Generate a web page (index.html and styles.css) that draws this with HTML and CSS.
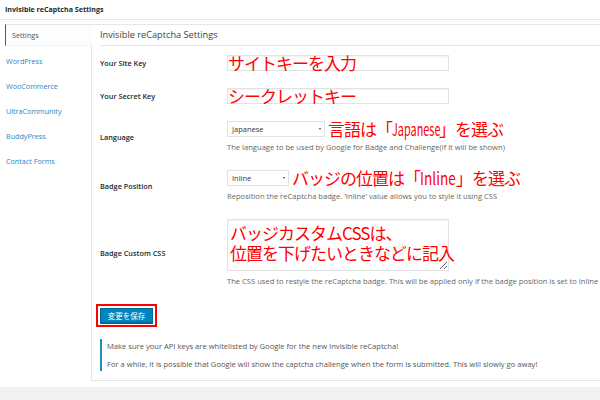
FILE: index.html
```html
<!DOCTYPE html>
<html lang="ja">
<head>
<meta charset="utf-8">
<title>Invisible reCaptcha Settings</title>
<link rel="stylesheet" href="styles.css">
</head>
<body>
<div class="page">
  <header class="topbar">Invisible reCaptcha Settings</header>
  <div class="wrap">
    <nav class="tabs">
      <a class="tab active">Settings</a>
      <a class="tab">WordPress</a>
      <a class="tab">WooCommerce</a>
      <a class="tab">UltraCommunity</a>
      <a class="tab">BuddyPress</a>
      <a class="tab">Contact Forms</a>
    </nav>
    <main class="panel">
      <h2 class="title">Invisible reCaptcha Settings</h2>
      <div class="form">
        <div class="label">Your Site Key</div>
        <div class="field">
          <div class="annot">
            <input class="text" type="text">
            <span class="note over">サイトキーを入力</span>
          </div>
        </div>

        <div class="label">Your Secret Key</div>
        <div class="field">
          <div class="annot">
            <input class="text" type="text">
            <span class="note over">シークレットキー</span>
          </div>
        </div>

        <div class="label">Language</div>
        <div class="field">
          <div class="line">
            <div class="select lang"><span>Japanese</span><i class="caret"></i></div>
            <span class="note">言語は「<span class="latin jp">Japanese</span>」を選ぶ</span>
          </div>
          <div class="desc">The language to be used by Google for Badge and Challenge(if it will be shown)</div>
        </div>

        <div class="label">Badge Position</div>
        <div class="field">
          <div class="line">
            <div class="select badge"><span>Inline</span><i class="caret"></i></div>
            <span class="note">バッジの位置は「<span class="latin il">Inline</span>」を選ぶ</span>
          </div>
          <div class="desc">Reposition the reCaptcha badge. 'Inline' value allows you to style it using CSS</div>
        </div>

        <div class="label">Badge Custom CSS</div>
        <div class="field">
          <div class="annot tall">
            <textarea class="area"></textarea>
            <div class="note over block"><div>バッジカスタムCSSは、</div><div>位置を下げたいときなどに記入</div></div>
          </div>
          <div class="desc">The CSS used to restyle the reCaptcha badge. This will be applied only if the badge position is set to Inline</div>
        </div>
      </div>
      <div class="submit"><button class="btn" type="button">変更を保存</button></div>
      <div class="notice">
        <p>Make sure your API keys are whitelisted by Google for the new Invisible reCaptcha!</p>
        <p>For a while, it is possible that Google will show the captcha challenge when the form is submitted. This will slowly go away!</p>
      </div>
    </main>
  </div>
</div>
</body>
</html>
```

FILE: styles.css
```css
html, body {
  margin: 0;
  background: #f1f1f1;
}
body {
  width: 600px;
  height: 400px;
  overflow: hidden;
  font-family: "Open Sans", "Noto Sans", "Liberation Sans", sans-serif;
}
.page {
  background: #fff;
  padding-bottom: 6px;
}
.topbar {
  height: 19px;
  line-height: 19px;
  border-bottom: 1px solid #e5e5e5;
  padding-left: 5px;
  font-size: 7.1px;
  font-weight: 700;
  color: #23282d;
}
.wrap {
  display: flex;
  margin-top: 4px;
}
.tabs {
  width: 86px;
  margin-left: 5px;
  display: flex;
  flex-direction: column;
}
.tab {
  display: block;
  height: 25px;
  line-height: 25px;
  padding-left: 1px;
  font-size: 7.2px;
  color: #2a86c0;
}
.tab.active {
  height: 20px;
  line-height: 20px;
  border-top: 1px solid #e5e5e5;
  border-bottom: 1px solid #eef3f7;
  border-left: 1px solid #0073aa;
  background: #fbfdff;
  color: #555;
  padding-left: 6px;
  margin-right: -1px;
  margin-bottom: 3px;
  position: relative;
  z-index: 1;
}
.panel {
  flex: 1;
  border-top: 1px solid #e5e5e5;
  border-left: 1px solid #e5e5e5;
  border-bottom: 1px solid #e5e5e5;
  padding: 0 0 9px 8px;
}
.title {
  margin: 0;
  height: 20px;
  line-height: 20px;
  border-bottom: 1px solid #e5e5e5;
  font-size: 9.2px;
  font-weight: 400;
  color: #444;
}
.form {
  display: grid;
  grid-template-columns: 127px 1fr;
  row-gap: 17px;
  align-items: center;
  margin-top: 9px;
}
.label {
  font-size: 7.3px;
  font-weight: 600;
  color: #23282d;
}
.annot {
  position: relative;
  width: 222px;
  height: 16px;
}
.annot.tall {
  height: 52px;
}
.text {
  display: block;
  box-sizing: border-box;
  width: 222px;
  height: 16px;
  margin: 0;
  padding: 0;
  border: 1px solid #e2e2e2;
  box-shadow: inset 0 1px 2px rgba(0,0,0,.06);
  background: #fff;
}
.over {
  position: absolute;
  left: 1px;
  top: -2px;
}
.over.block {
  left: 3px;
  top: 4px;
  line-height: 20px;
}
.note {
  color: #ff0000;
  font-family: "Noto Sans CJK JP", sans-serif;
  font-size: 17px;
  letter-spacing: -1px;
  line-height: 20px;
  white-space: nowrap;
}
.latin {
  display: inline-block;
  transform-origin: left center;
  letter-spacing: 0;
}
.latin.jp {
  width: 47px;
  transform: scaleX(0.64);
}
.latin.il {
  width: 36px;
  transform: scaleX(0.8);
}
.line {
  display: flex;
  align-items: center;
  gap: 3px;
  height: 16px;
}
.select {
  box-sizing: border-box;
  height: 16px;
  display: flex;
  align-items: center;
  justify-content: space-between;
  padding: 0 3px 0 4px;
  border: 1px solid #e2e2e2;
  background: #fff;
  font-size: 7.5px;
  color: #32373c;
}
.select.lang { width: 98px; }
.select.badge { width: 62px; }
.caret {
  width: 0;
  height: 0;
  border-left: 1.5px solid transparent;
  border-right: 1.5px solid transparent;
  border-top: 2.5px solid #444;
}
.desc {
  margin-top: 5px;
  line-height: 11px;
  font-size: 7.6px;
  color: #666;
  white-space: nowrap;
}
.area {
  display: block;
  box-sizing: border-box;
  width: 222px;
  height: 52px;
  margin: 0;
  padding: 0;
  border: 1px solid #e2e2e2;
  box-shadow: inset 0 1px 2px rgba(0,0,0,.06);
  overflow: hidden;
  resize: vertical;
}
.submit {
  margin-top: 21px;
}
.btn {
  display: block;
  box-sizing: border-box;
  width: 53px;
  height: 15px;
  padding: 0;
  border: 1px solid #006799;
  border-radius: 0;
  background: #0085ba;
  box-shadow: 0 1px 0 #006799;
  color: #fff;
  font-family: "Noto Sans CJK JP", sans-serif;
  font-size: 7.5px;
  outline: 2px solid #ff0000;
  outline-offset: 2px;
}
.notice {
  margin-top: 16px;
  border-left: 2px solid #1e8cbe;
  padding: 0 0 0 5px;
}
.notice p {
  margin: 0;
  line-height: 14px;
  font-size: 7.6px;
  color: #555;
}
.notice p + p {
  margin-top: 4px;
}
```
